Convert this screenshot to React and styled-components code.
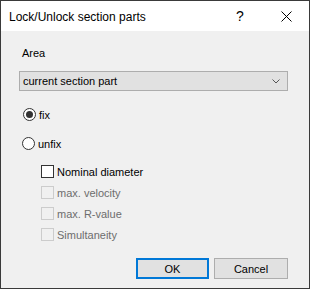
import styled, { createGlobalStyle } from 'styled-components'

const Global = createGlobalStyle`
body{
margin:0;
font-family:"Liberation Sans", Arial, sans-serif;
font-size:11px;
color:#000;
}
`
const Window = styled.div`
width:310px;
height:289px;
box-sizing:border-box;
border:1px solid #3a3a3a;
display:flex;
flex-direction:column;
background:#f0f0f0;
`
const TitleBar = styled.div`
height:30px;
background:#fff;
display:flex;
align-items:center;
padding-left:8px;
`
const Title = styled.span`
flex:1;
font-size:12px;
margin-top:1px;
`
const Help = styled.span`
width:16px;
font-size:14px;
margin-right:15px;
text-align:center;
`
const Close = styled.span`
width:46px;
display:flex;
justify-content:center;
`
const Body = styled.div`
flex:1;
display:flex;
flex-direction:column;
padding:15px 21px 9px 18px;
`
const Label = styled.div`
line-height:15px;
padding-left:3px;
`
const Select = styled.div`
margin-top:10px;
height:18px;
border:1px solid #adadad;
background:#e1e1e1;
display:flex;
align-items:center;
justify-content:space-between;
padding:0 7px 0 3px;
`
const Radio = styled.div`
display:flex;
align-items:center;
height:15px;
margin-top:${p => p.top}px;
padding-left:${p => p.indent}px;
`
const Circle = styled.span`
width:11px;
height:11px;
border:1px solid #333;
border-radius:50%;
background:#fff;
display:flex;
align-items:center;
justify-content:center;
margin-right:3px;
&::after{
  content:'';
  display:${p => p.checked ? 'block' : 'none'};
  width:7px;
  height:7px;
  border-radius:50%;
  background:#333;
}
`
const CheckList = styled.div`
display:flex;
flex-direction:column;
gap:6px;
margin-top:13px;
padding-left:22px;
`
const Check = styled.div`
display:flex;
align-items:center;
height:15px;
color:${p => p.disabled ? '#6d6d6d' : '#000'};
`
const Box = styled.span`
width:11px;
height:11px;
border:1px solid ${p => p.disabled ? '#cccccc' : '#333'};
background:${p => p.disabled ? '#f0f0f0' : '#fff'};
margin-right:3px;
`
const Buttons = styled.div`
margin-top:auto;
display:flex;
justify-content:flex-end;
gap:5px;
`
const Button = styled.button`
width:${p => p.w}px;
height:21px;
box-sizing:border-box;
font-family:inherit;
font-size:11px;
background:#e1e1e1;
border:${p => p.primary ? '2px solid #0078d7' : '1px solid #adadad'};
padding:0;
color:#000;
`

export default function App() {
  return (
    <>
      <Global />
      <Window>
        <TitleBar>
          <Title>Lock/Unlock section parts</Title>
          <Help>?</Help>
          <Close>
            <svg width="11" height="11" viewBox="0 0 11 11">
              <path d="M0.5 0.5L10.5 10.5M10.5 0.5L0.5 10.5" stroke="#000" strokeWidth="1" />
            </svg>
          </Close>
        </TitleBar>
        <Body>
          <Label>Area</Label>
          <Select>
            <span>current section part</span>
            <svg width="8" height="5" viewBox="0 0 8 5">
              <path d="M0.5 0.5L4 4L7.5 0.5" stroke="#555" fill="none" strokeWidth="1" />
            </svg>
          </Select>
          <Radio top={16} indent={4}><Circle checked />fix</Radio>
          <Radio top={14} indent={3}><Circle />unfix</Radio>
          <CheckList>
            <Check><Box />Nominal diameter</Check>
            <Check disabled><Box disabled />max. velocity</Check>
            <Check disabled><Box disabled />max. R-value</Check>
            <Check disabled><Box disabled />Simultaneity</Check>
          </CheckList>
          <Buttons>
            <Button primary w={73}>OK</Button>
            <Button w={74}>Cancel</Button>
          </Buttons>
        </Body>
      </Window>
    </>
  )
}
